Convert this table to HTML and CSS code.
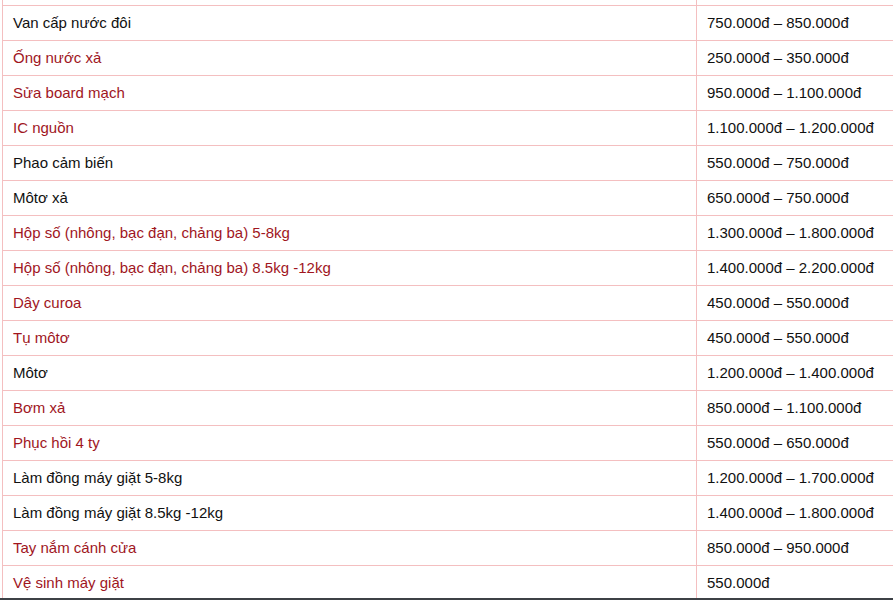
FILE: index.html
```html
<!DOCTYPE html>
<html lang="vi">
<head>
<meta charset="utf-8">
<link rel="stylesheet" href="styles.css">
</head>
<body>
<table class="price-table">
  <tbody>
    <tr class="spacer-row"><td class="name"></td><td class="price"></td></tr>
    <tr><td class="name">Van cấp nước đôi</td><td class="price">750.000đ – 850.000đ</td></tr>
    <tr><td class="name red">Ống nước xả</td><td class="price">250.000đ – 350.000đ</td></tr>
    <tr><td class="name red">Sửa board mạch</td><td class="price">950.000đ – 1.100.000đ</td></tr>
    <tr><td class="name red">IC nguồn</td><td class="price">1.100.000đ – 1.200.000đ</td></tr>
    <tr><td class="name">Phao cảm biến</td><td class="price">550.000đ – 750.000đ</td></tr>
    <tr><td class="name">Môtơ xả</td><td class="price">650.000đ – 750.000đ</td></tr>
    <tr><td class="name red">Hộp số (nhông, bạc đạn, chảng ba) 5-8kg</td><td class="price">1.300.000đ – 1.800.000đ</td></tr>
    <tr><td class="name red">Hộp số (nhông, bạc đạn, chảng ba) 8.5kg -12kg</td><td class="price">1.400.000đ – 2.200.000đ</td></tr>
    <tr><td class="name red">Dây curoa</td><td class="price">450.000đ – 550.000đ</td></tr>
    <tr><td class="name red">Tụ môtơ</td><td class="price">450.000đ – 550.000đ</td></tr>
    <tr><td class="name">Môtơ</td><td class="price">1.200.000đ – 1.400.000đ</td></tr>
    <tr><td class="name red">Bơm xả</td><td class="price">850.000đ – 1.100.000đ</td></tr>
    <tr><td class="name red">Phục hồi 4 ty</td><td class="price">550.000đ – 650.000đ</td></tr>
    <tr><td class="name">Làm đồng máy giặt 5-8kg</td><td class="price">1.200.000đ – 1.700.000đ</td></tr>
    <tr><td class="name">Làm đồng máy giặt 8.5kg -12kg</td><td class="price">1.400.000đ – 1.800.000đ</td></tr>
    <tr><td class="name red">Tay nắm cánh cửa</td><td class="price">850.000đ – 950.000đ</td></tr>
    <tr><td class="name red">Vệ sinh máy giặt</td><td class="price">550.000đ</td></tr>
  </tbody>
</table>
<div class="bottom-edge"></div>
</body>
</html>
```
FILE: styles.css
```css
html, body {
  margin: 0;
  padding: 0;
  background: #ffffff;
  overflow: hidden;
}
body {
  font-family: "Liberation Sans", Arial, sans-serif;
  font-size: 15px;
  color: #111111;
}
.price-table {
  border-collapse: collapse;
  margin: -30px 0 0 2px;
  width: 900px;
  table-layout: fixed;
}
.price-table td {
  border: 1px solid #f4bfc0;
  padding: 8px 10px;
  height: 18px;
  line-height: 18px;
  vertical-align: middle;
  white-space: nowrap;
}
.price-table td.name {
  width: 673px;
}
.price-table td.red {
  color: #a0161e;
}
.bottom-edge {
  position: fixed;
  left: 0;
  right: 0;
  bottom: 0;
  height: 2px;
  background: #3d4146;
}
```
